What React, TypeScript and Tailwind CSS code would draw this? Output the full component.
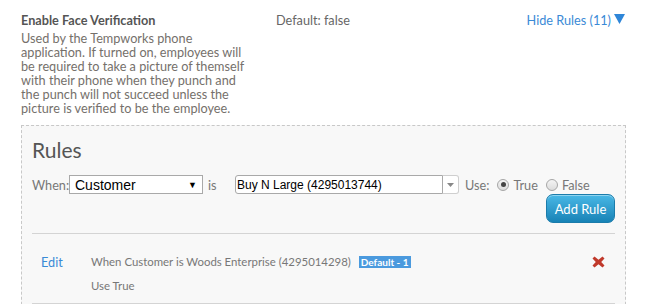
import React from "react";

const Radio = ({ checked }: { checked?: boolean }) => (
  <span className="inline-flex h-[12px] w-[12px] items-center justify-center rounded-full border border-[#a6a6a6] bg-gradient-to-b from-[#f4f4f4] to-[#dcdcdc]">
    {checked && <span className="h-[5px] w-[5px] rounded-full bg-[#444]" />}
  </span>
);

export default function App() {
  return (
    <div className="h-[304px] w-[649px] overflow-hidden bg-white pl-[21px] pt-[13px] font-['Lato','Noto_Sans',sans-serif] text-[12.7px] leading-[14px] text-[#75706b]">
      <div className="flex">
        <div className="w-[226px]">
          <div className="mb-[4px] font-bold text-[#555]">Enable Face Verification</div>
          <p>
            Used by the Tempworks phone application. If turned on, employees will be required to take a picture of themself with their phone when they punch and the punch will not succeed unless the picture is verified to be the employee.
          </p>
        </div>
        <div className="ml-[29px] text-[#666]">Default: false</div>
        <div className="ml-auto mr-[24px] flex items-start gap-[3px] text-[#3a8ad6]">
          <span>Hide Rules (11)</span>
          <svg width="11" height="10" viewBox="0 0 11 10" className="mt-[1px]">
            <path d="M0 0H11L5.5 10Z" fill="#2f86d8" />
          </svg>
        </div>
      </div>

      <div className="mt-[10px] w-[605px] border border-dashed border-[#c8c8c8] bg-[#f8f8f8] px-[10px] pb-[20px]">
        <h2 className="pt-[11px] text-[21px] leading-[26px] text-[#555]">Rules</h2>
        <div className="mt-[12px] flex items-center text-[#777]">
          <span className="w-[37px]">When:</span>
          <div className="flex h-[19px] w-[134px] items-center justify-between border border-[#a9a9a9] bg-white pl-[5px] pr-[5px] font-['Liberation_Sans',sans-serif] text-[14px] text-black">
            <span>Customer</span>
            <span className="text-[9px]">▼</span>
          </div>
          <span className="ml-[5px] w-[27px]">is</span>
          <div className="flex h-[19px] w-[208px] items-center rounded-l-[3px] border border-[#a9a9a9] bg-white pl-[1px] font-['Liberation_Sans',sans-serif] text-[12px] text-black">
            Buy N Large (4295013744)
          </div>
          <div className="flex h-[19px] w-[16px] items-center justify-center rounded-r-[3px] border border-l-0 border-[#cfcfcf] bg-white">
            <svg width="7" height="4" viewBox="0 0 7 4">
              <path d="M0 0H7L3.5 4Z" fill="#888" />
            </svg>
          </div>
          <span className="ml-[6px]">Use:</span>
          <span className="ml-[8px] flex items-center gap-[4px]">
            <Radio checked />
            <span>True</span>
          </span>
          <span className="ml-[8px] flex items-center gap-[4px]">
            <Radio />
            <span>False</span>
          </span>
        </div>
        <div className="mt-[0px] flex justify-end">
          <button className="h-[29px] w-[69px] rounded-[7px] border border-[#1b7cab] bg-gradient-to-b from-[#48b8e6] to-[#1783b6] text-[13px] text-white shadow-[inset_0_1px_0_rgba(255,255,255,0.4)]">
            Add Rule
          </button>
        </div>
        <div className="mt-[10px] border-t border-[#d4d4d4]" />
        <div className="flex pt-[21px] pb-[10px]">
          <span className="w-[59px] pl-[9px] text-[#3a8ad6]">Edit</span>
          <div className="flex-1 text-[11.4px] text-[#777]">
            <div className="flex items-center">
              <span>When Customer is Woods Enterprise (4295014298)</span>
              <span className="ml-[8px] bg-[#4b9ade] px-[2px] text-[10px] leading-[12px] font-bold text-white">Default - 1</span>
            </div>
            <div className="mt-[10px]">Use True</div>
          </div>
          <svg width="13" height="12" viewBox="0 0 13 12" className="mr-[10px] mt-[1px]">
            <path d="M0.5 2.5L2.5 0.5L6.5 3.8L10.5 0.5L12.5 2.5L9.2 6L12.5 9.5L10.5 11.5L6.5 8.2L2.5 11.5L0.5 9.5L3.8 6Z" fill="#c0392b" />
          </svg>
        </div>
        <div className="border-t border-[#d4d4d4]" />
      </div>
    </div>
  );
}
